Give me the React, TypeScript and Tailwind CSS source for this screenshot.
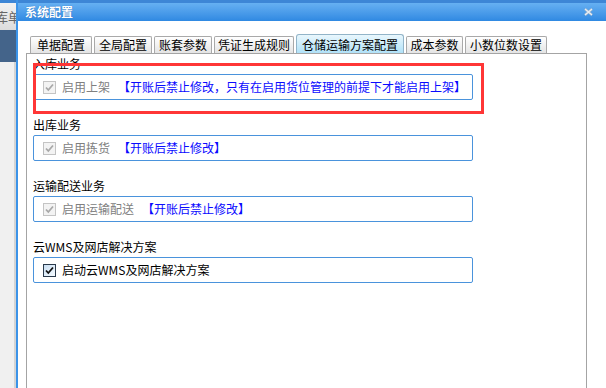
import type { ReactNode } from "react";

const FONT = { fontFamily: '"Noto Sans CJK SC", "Noto Sans", sans-serif' };

const TABS = [
  { label: "单据配置", w: "w-[62px]" },
  { label: "全局配置", w: "w-[58px]" },
  { label: "账套参数", w: "w-[58px]" },
  { label: "凭证生成规则", w: "w-[80px]" },
  { label: "仓储运输方案配置", w: "w-[108px]", active: true },
  { label: "成本参数", w: "w-[57px]" },
  { label: "小数位数设置", w: "w-[82px]" },
];

function Check({ enabled }: { enabled?: boolean }) {
  if (enabled) {
    return (
      <span className="flex h-[13px] w-[13px] shrink-0 items-center justify-center border border-[#2a3a4c] bg-gradient-to-br from-[#c9def2] to-[#f6fbff]">
        <svg width="11" height="11" viewBox="0 0 11 11">
          <path d="M2 5.5 L4.3 8 L9 2.5" fill="none" stroke="#111" strokeWidth="1.8" />
        </svg>
      </span>
    );
  }
  return (
    <span className="flex h-[13px] w-[13px] shrink-0 items-center justify-center border border-[#c4c4c4] bg-[#f3f3f3]">
      <svg width="11" height="11" viewBox="0 0 11 11">
        <path d="M2 5.5 L4.3 8 L9 2.5" fill="none" stroke="#a8a8a8" strokeWidth="1.8" />
      </svg>
    </span>
  );
}

function Section({
  title,
  children,
  annotate,
}: {
  title: string;
  children: ReactNode;
  annotate?: boolean;
}) {
  return (
    <div className="relative flex flex-col">
      <div className="h-[14px] text-[12px] leading-[14px] text-black">{title}</div>
      <div className="mt-[3px] flex h-[26px] w-[440px] items-center gap-[6px] rounded-[2px] border border-[#4a93dc] pl-[9px] text-[12px] leading-[14px]">
        {children}
      </div>
      {annotate && (
        <div className="absolute left-0 top-[6px] h-[51px] w-[451px] border-[3px] border-[#ff3636]" />
      )}
    </div>
  );
}

function Note({ text }: { text: string }) {
  return <span className="ml-[2px] text-[#0a0aff]">{text}</span>;
}

export default function App() {
  return (
    <div className="flex h-[388px] w-[606px] overflow-hidden bg-[#f0f0f0]" style={FONT}>
      {/* window behind */}
      <div className="flex w-[16px] shrink-0 flex-col">
        <div className="h-[3px] bg-[#3d86d6]" />
        <div className="flex h-[27px] items-center justify-end overflow-hidden bg-gradient-to-b from-[#f2f2f2] to-[#dcdcdc]">
          <span className="mr-[-5px] whitespace-nowrap text-[13px] text-[#666]">库单</span>
        </div>
        <div className="h-[32px] bg-[#44648a]" />
        <div className="flex-1 border-r-2 border-[#d4d4d4] bg-[#f0f0f0]" />
      </div>

      {/* dialog */}
      <div className="flex flex-1 flex-col border-l-2 border-[#3b93e8]">
        <div className="flex h-[21px] shrink-0 items-center justify-between border-t-[3px] border-[#3d86d6] bg-gradient-to-b from-[#66b0f2] to-[#2f89e2] pl-[7px] pr-[13px]">
          <span className="text-[12px] font-bold leading-[14px] text-white [text-shadow:0_0_1px_#1a5fb0]">
            系统配置
          </span>
          <svg width="9" height="8" viewBox="0 0 9 8">
            <path d="M1 1 L8 7 M8 1 L1 7" stroke="#9fb6cc" strokeWidth="2.4" />
            <path d="M1 1 L8 7 M8 1 L1 7" stroke="#e8eef5" strokeWidth="1.2" />
          </svg>
        </div>

        <div className="flex flex-1 flex-col bg-white">
          <div className="ml-[8px] mr-[19px] flex flex-1 flex-col">
            <div className="flex h-[32px] items-end gap-[2px] pl-[4px]">
              {TABS.map((t) =>
                t.active ? (
                  <div
                    key={t.label}
                    className={`${t.w} mb-[-1px] flex h-[20px] items-center justify-center rounded-t-[3px] border border-b-0 border-[#92b4c8] bg-gradient-to-b from-[#e9f7fd] to-[#ade0f7] text-[12px] text-black`}
                  >
                    {t.label}
                  </div>
                ) : (
                  <div
                    key={t.label}
                    className={`${t.w} flex h-[17px] items-center justify-center rounded-t-[2px] border border-b-0 border-[#a9a9a9] bg-gradient-to-b from-white to-[#e4e4e4] text-[12px] text-black`}
                  >
                    {t.label}
                  </div>
                )
              )}
            </div>
            <div className="flex flex-1 flex-col gap-[18px] border border-b-0 border-[#a4a4a4] pl-[6px] pt-[3px]">
              <Section title="入库业务" annotate>
                <Check />
                <span className="text-[#808080]">启用上架</span>
                <Note text="【开账后禁止修改，只有在启用货位管理的前提下才能启用上架】" />
              </Section>
              <Section title="出库业务">
                <Check />
                <span className="text-[#808080]">启用拣货</span>
                <Note text="【开账后禁止修改】" />
              </Section>
              <Section title="运输配送业务">
                <Check />
                <span className="text-[#808080]">启用运输配送</span>
                <Note text="【开账后禁止修改】" />
              </Section>
              <Section title="云WMS及网店解决方案">
                <Check enabled />
                <span className="text-black">启动云WMS及网店解决方案</span>
              </Section>
            </div>
          </div>
        </div>
      </div>
    </div>
  );
}
